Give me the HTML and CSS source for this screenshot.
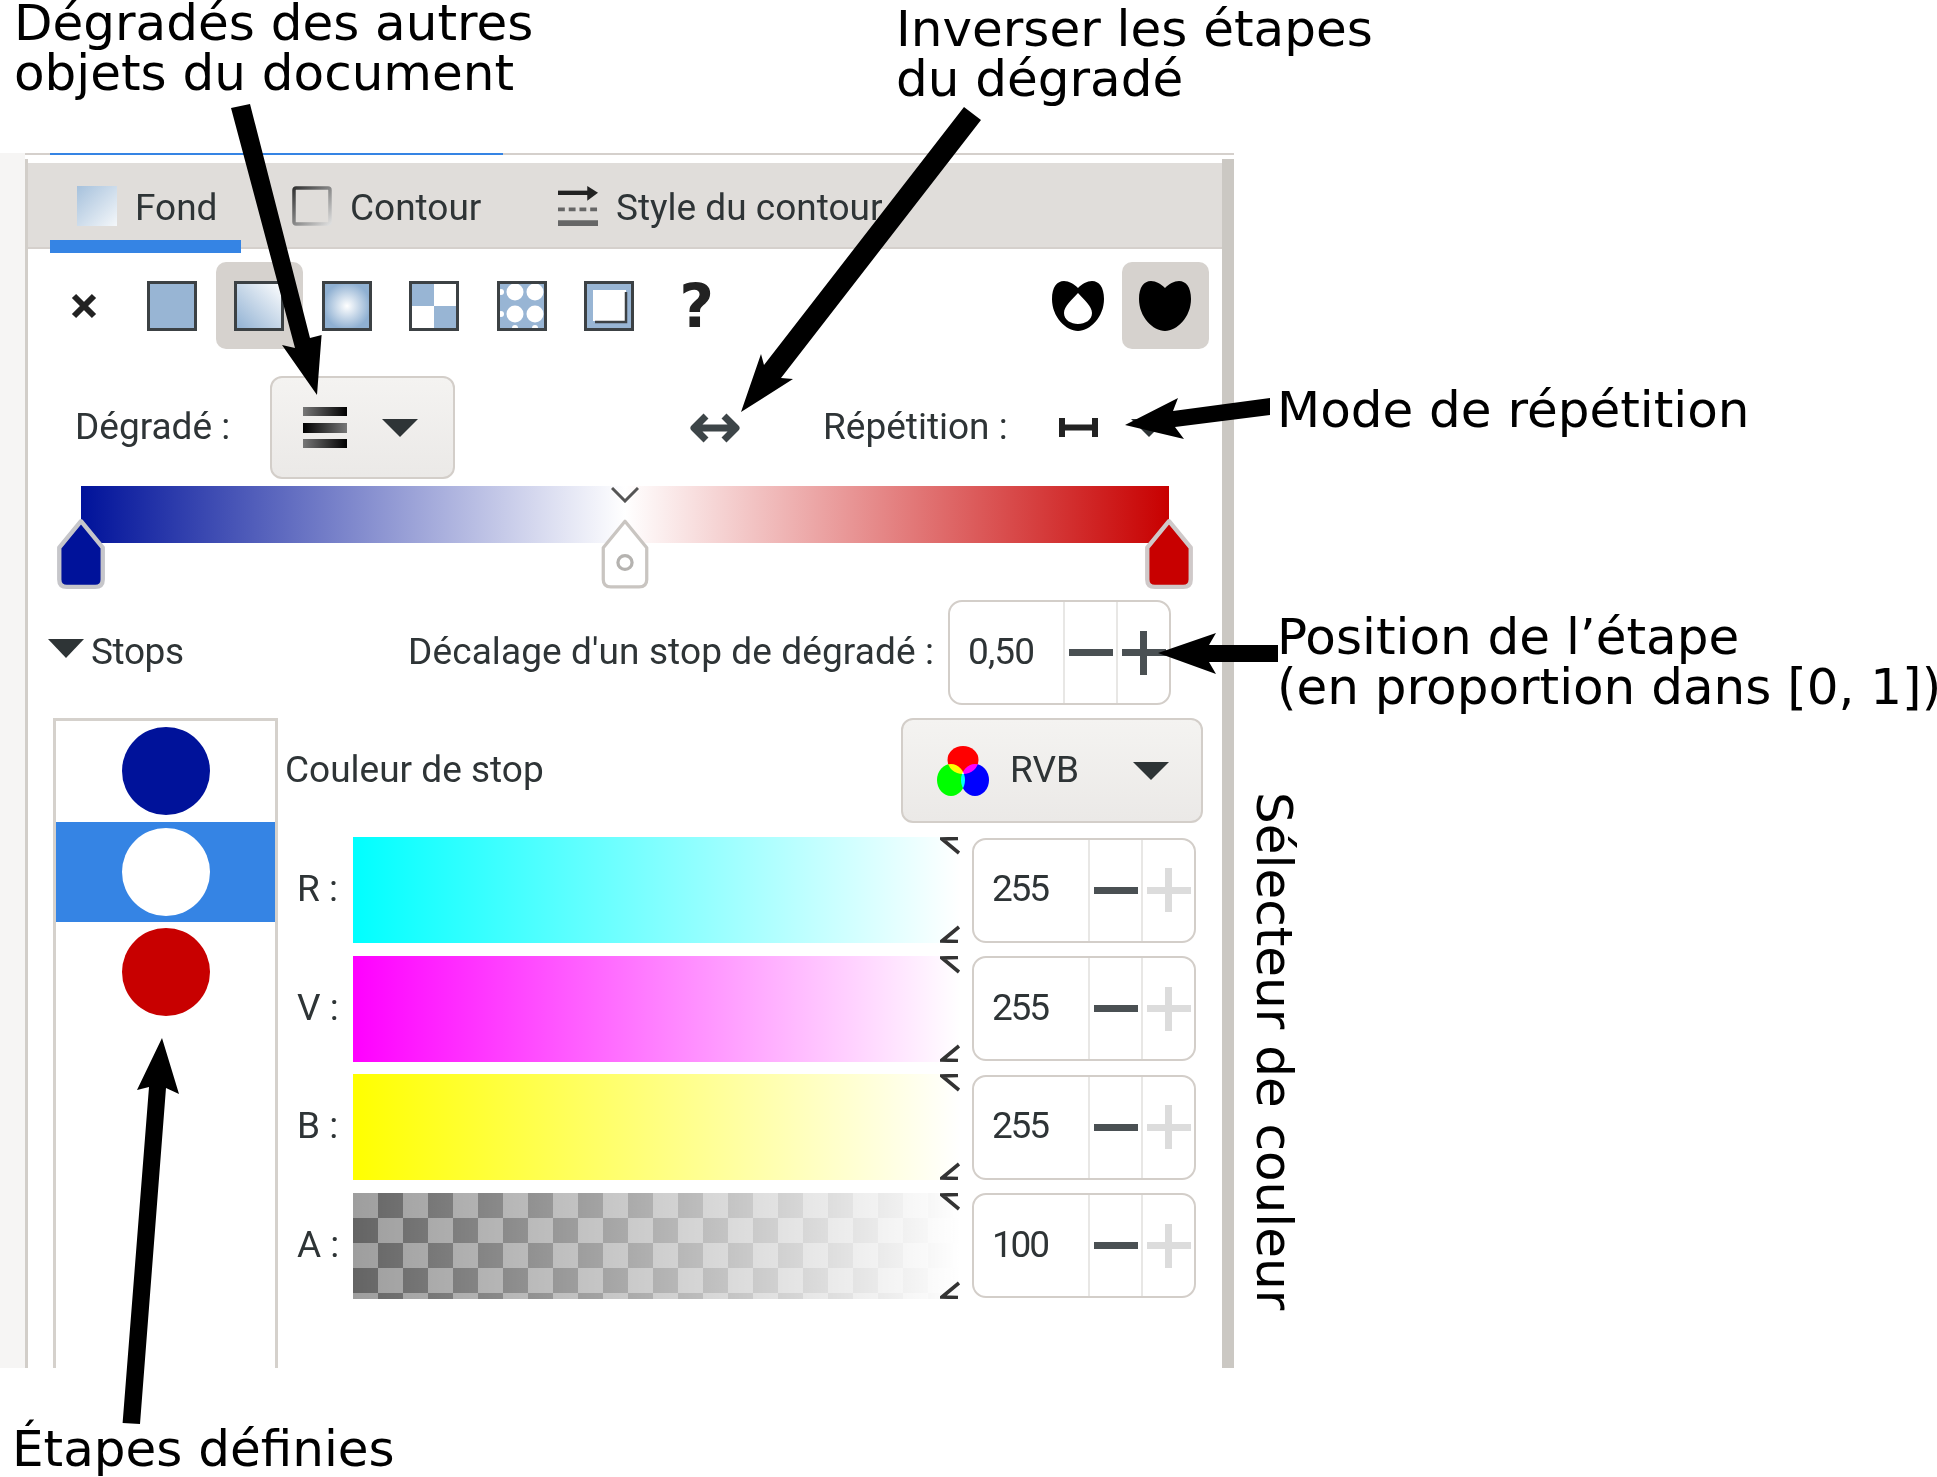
FILE: index.html
```html
<!DOCTYPE html>
<html lang="fr">
  <head>
    <meta charset="UTF-8" />
    <title>Fond et contour</title>
    <link rel="stylesheet" href="styles.css">
  </head>

  <body>
    <svg class="defs" width="0" height="0">
      <symbol id="tick-top" viewBox="0 0 20 18">
        <path d="M18 1.5 L2 2 L19 16" fill="none" stroke="#333" stroke-width="3.6" />
      </symbol>
      <symbol id="tick-bottom" viewBox="0 0 20 18">
        <path d="M19 2 L2 16 L18 16.5" fill="none" stroke="#333" stroke-width="3.6" />
      </symbol>
      <linearGradient id="diag" x1="0" y1="1" x2="1" y2="0">
        <stop offset="0" stop-color="#8fb0d2" />
        <stop offset="1" stop-color="#ffffff" />
      </linearGradient>
      <radialGradient id="radial">
        <stop offset="0" stop-color="#ffffff" />
        <stop offset="1" stop-color="#8fb0d2" />
      </radialGradient>
      <linearGradient id="tabfill" x1="0" y1="0" x2="1" y2="1">
        <stop offset="0" stop-color="#a6c1dc" />
        <stop offset="1" stop-color="#f4f7fa" />
      </linearGradient>
      <linearGradient id="tabstroke" x1="0" y1="0" x2="1" y2="1">
        <stop offset="0" stop-color="#333" />
        <stop offset="1" stop-color="#ddd" />
      </linearGradient>
      <linearGradient id="barfade" x1="0" y1="0" x2="1" y2="0">
        <stop offset="0" stop-color="#777" />
        <stop offset="1" stop-color="#000" />
      </linearGradient>
      <linearGradient id="barfade-back" x1="0" y1="0" x2="1" y2="0">
        <stop offset="0" stop-color="#000" />
        <stop offset="1" stop-color="#777" />
      </linearGradient>
    </svg>

    <!--Capture du dialogue-->
    <main class="panel">
      <div class="strip"></div>
      <div class="dialog">
        <div class="topline"><div class="topline-active"></div></div>
        <div class="dialog-body">

          <div class="tabs">
            <div class="tab tab-active">
              <svg class="tab-icon" viewBox="0 0 40 40"><rect width="40" height="40" fill="url(#tabfill)" /></svg>
              <span>Fond</span>
            </div>
            <div class="tab tab-contour">
              <svg class="tab-icon" viewBox="0 0 40 40"><rect x="2" y="2" width="36" height="36" fill="none" stroke="url(#tabstroke)" stroke-width="3.5" rx="2" /></svg>
              <span>Contour</span>
            </div>
            <div class="tab">
              <svg class="tab-icon" viewBox="0 0 41 41">
                <path d="M0 7 H32" stroke="#222" stroke-width="4.5" />
                <path d="M30 0 L41 7 L30 15 Z" fill="#222" />
                <path d="M0 24 H41" stroke="#666" stroke-width="4" stroke-dasharray="7 4" />
                <path d="M0 38 H41" stroke="#666" stroke-width="6" />
              </svg>
              <span>Style du contour</span>
            </div>
          </div>

          <div class="paint-row">
            <div class="paint-btn">
              <svg class="icon-x" viewBox="0 0 28 28"><path d="M4 4 L24 24 M24 4 L4 24" stroke="#222" stroke-width="6" /></svg>
            </div>
            <div class="paint-btn">
              <svg class="icon-square" viewBox="0 0 50 50"><rect x="1.5" y="1.5" width="47" height="47" fill="#98b5d4" stroke="#3c4144" stroke-width="3" /></svg>
            </div>
            <div class="paint-btn paint-btn-on">
              <svg class="icon-square" viewBox="0 0 50 50"><rect x="1.5" y="1.5" width="47" height="47" fill="url(#diag)" stroke="#3c4144" stroke-width="3" /></svg>
            </div>
            <div class="paint-btn">
              <svg class="icon-square" viewBox="0 0 50 50"><rect x="1.5" y="1.5" width="47" height="47" fill="url(#radial)" stroke="#3c4144" stroke-width="3" /></svg>
            </div>
            <div class="paint-btn">
              <svg class="icon-square" viewBox="0 0 50 50">
                <rect x="1.5" y="1.5" width="47" height="47" fill="#fff" />
                <rect x="2" y="2" width="23" height="23" fill="#98b5d4" />
                <rect x="25" y="25" width="23" height="23" fill="#98b5d4" />
                <rect x="1.5" y="1.5" width="47" height="47" fill="none" stroke="#3c4144" stroke-width="3" />
              </svg>
            </div>
            <div class="paint-btn">
              <svg class="icon-square" viewBox="0 0 50 50">
                <rect x="1.5" y="1.5" width="47" height="47" fill="#98b5d4" />
                <g fill="#fff">
                  <circle cx="18" cy="11" r="8.5" />
                  <circle cx="38" cy="11" r="8.5" />
                  <circle cx="18" cy="33" r="8.5" />
                  <circle cx="38" cy="33" r="8.5" />
                  <circle cx="4" cy="11" r="3" />
                  <circle cx="4" cy="33" r="3" />
                  <circle cx="18" cy="47" r="3" />
                  <circle cx="38" cy="47" r="3" />
                </g>
                <rect x="1.5" y="1.5" width="47" height="47" fill="none" stroke="#3c4144" stroke-width="3" />
              </svg>
            </div>
            <div class="paint-btn">
              <svg class="icon-square" viewBox="0 0 50 50">
                <rect x="1.5" y="1.5" width="47" height="47" fill="#98b5d4" stroke="#3c4144" stroke-width="3" />
                <rect x="9" y="9" width="33" height="31" fill="#fff" />
                <path d="M11 41 H42 V11" fill="none" stroke="#3c4144" stroke-width="2.5" />
              </svg>
            </div>
            <div class="paint-btn paint-unknown">?</div>

            <div class="rule-btn rule-first">
              <svg class="icon-rule" viewBox="0 0 52 50">
                <path fill-rule="evenodd" fill="#000" d="M26 7 C22 3 17 0 12 0 C5 0 0 6 0 18 C0 36 14 50 26 50 C38 50 52 36 52 18 C52 6 47 0 40 0 C35 0 30 3 26 7 Z M26 12 C20 19 12 25 12 32 C12 39 19 43 26 43 C33 43 40 39 40 32 C40 25 32 19 26 12 Z" />
              </svg>
            </div>
            <div class="rule-btn paint-btn-on">
              <svg class="icon-rule" viewBox="0 0 52 50">
                <path fill="#000" d="M26 7 C22 3 17 0 12 0 C5 0 0 6 0 18 C0 36 14 50 26 50 C38 50 52 36 52 18 C52 6 47 0 40 0 C35 0 30 3 26 7 Z" />
              </svg>
            </div>
          </div>

          <div class="gradient-row">
            <span class="label label-gradient">Dégradé :</span>
            <div class="combo combo-gradient">
              <svg class="icon-bars" viewBox="0 0 44 41">
                <rect y="0" width="44" height="9" fill="url(#barfade)" />
                <rect y="16" width="44" height="10" fill="url(#barfade-back)" />
                <rect y="32" width="44" height="9" fill="url(#barfade)" />
              </svg>
              <span class="caret"></span>
            </div>
            <svg class="icon-flip" viewBox="0 0 50 32">
              <path d="M4 16 H46 M16 4 L4 16 L16 28 M34 4 L46 16 L34 28" fill="none" stroke="#3d4548" stroke-width="7" stroke-linejoin="round" />
            </svg>
            <span class="label label-repeat">Répétition :</span>
            <svg class="icon-repeat" viewBox="0 0 39 19">
              <path d="M3 0 V19 M36 0 V19 M2 9.5 H37" stroke="#222" stroke-width="6" fill="none" />
            </svg>
            <span class="caret caret-repeat"></span>
          </div>

          <div class="gradient-widget">
            <div class="gradient-bar"></div>
            <svg class="midpoint" viewBox="0 0 28 16"><path d="M1 1 L14 14 L27 1" fill="none" stroke="#555" stroke-width="3" /></svg>
            <svg class="stop-handle stop-handle-start" viewBox="0 0 46 68" preserveAspectRatio="none">
              <path d="M23 3 L43 28 V58 Q43 65 36 65 H10 Q3 65 3 58 V28 Z" fill="#00129a" stroke="#c6c6ca" stroke-width="4" stroke-linejoin="round" />
            </svg>
            <svg class="stop-handle stop-handle-mid" viewBox="0 0 46 68" preserveAspectRatio="none">
              <path d="M23 3 L43 28 V58 Q43 65 36 65 H10 Q3 65 3 58 V28 Z" fill="#fff" stroke="#c9c5c1" stroke-width="3" stroke-linejoin="round" />
              <circle cx="23" cy="42" r="6.5" fill="#fff" stroke="#b5b3b0" stroke-width="3" />
            </svg>
            <svg class="stop-handle stop-handle-end" viewBox="0 0 46 68" preserveAspectRatio="none">
              <path d="M23 3 L43 28 V58 Q43 65 36 65 H10 Q3 65 3 58 V28 Z" fill="#c80000" stroke="#cfc9c9" stroke-width="4" stroke-linejoin="round" />
            </svg>
          </div>

          <div class="stops-row">
            <span class="caret caret-stops"></span>
            <span class="label label-stops">Stops</span>
            <span class="label label-offset">Décalage d'un stop de dégradé :</span>
            <div class="spin spin-offset">
              <div class="spin-value">0,50</div>
              <div class="spin-btn"><span class="minus"></span></div>
              <div class="spin-btn"><span class="plus"></span></div>
            </div>
          </div>

          <div class="stops-main">
            <div class="stop-list">
              <div class="stop-item"><span class="stop-dot dot-blue"></span></div>
              <div class="stop-item stop-item-on"><span class="stop-dot dot-white"></span></div>
              <div class="stop-item"><span class="stop-dot dot-red"></span></div>
            </div>

            <div class="color-col">
              <div class="color-head">
                <span class="label">Couleur de stop</span>
                <div class="combo combo-mode">
                  <svg class="icon-rgb" viewBox="0 0 52 50">
                    <g class="rgb-group">
                      <ellipse cx="26" cy="14" rx="15.5" ry="14" fill="#f00" />
                      <ellipse cx="14" cy="34" rx="14" ry="16" fill="#0f0" />
                      <ellipse cx="38" cy="34" rx="14" ry="16" fill="#00f" />
                    </g>
                  </svg>
                  <span class="label label-mode">RVB</span>
                  <span class="caret"></span>
                </div>
              </div>

              <div class="color-rows">
                <div class="color-row">
                  <span class="label channel">R :</span>
                  <div class="color-bar bar-r">
                    <svg class="tick tick-up"><use href="#tick-top" /></svg>
                    <svg class="tick tick-down"><use href="#tick-bottom" /></svg>
                  </div>
                  <div class="spin spin-channel">
                    <div class="spin-value">255</div>
                    <div class="spin-btn"><span class="minus"></span></div>
                    <div class="spin-btn"><span class="plus plus-off"></span></div>
                  </div>
                </div>
                <div class="color-row">
                  <span class="label channel">V :</span>
                  <div class="color-bar bar-v">
                    <svg class="tick tick-up"><use href="#tick-top" /></svg>
                    <svg class="tick tick-down"><use href="#tick-bottom" /></svg>
                  </div>
                  <div class="spin spin-channel">
                    <div class="spin-value">255</div>
                    <div class="spin-btn"><span class="minus"></span></div>
                    <div class="spin-btn"><span class="plus plus-off"></span></div>
                  </div>
                </div>
                <div class="color-row">
                  <span class="label channel">B :</span>
                  <div class="color-bar bar-b">
                    <svg class="tick tick-up"><use href="#tick-top" /></svg>
                    <svg class="tick tick-down"><use href="#tick-bottom" /></svg>
                  </div>
                  <div class="spin spin-channel">
                    <div class="spin-value">255</div>
                    <div class="spin-btn"><span class="minus"></span></div>
                    <div class="spin-btn"><span class="plus plus-off"></span></div>
                  </div>
                </div>
                <div class="color-row">
                  <span class="label channel">A :</span>
                  <div class="color-bar bar-a">
                    <svg class="tick tick-up"><use href="#tick-top" /></svg>
                    <svg class="tick tick-down"><use href="#tick-bottom" /></svg>
                  </div>
                  <div class="spin spin-channel">
                    <div class="spin-value">100</div>
                    <div class="spin-btn"><span class="minus"></span></div>
                    <div class="spin-btn"><span class="plus plus-off"></span></div>
                  </div>
                </div>
              </div>
            </div>
          </div>

        </div>
      </div>
    </main>
    <!--Fin de la capture-->

    <!--Annotations-->
    <svg class="arrows" viewBox="0 0 1937 1477">
      <polygon points="231,108 250,104 310,338 321.6,335 317,395 282,345 295,348" />
      <polygon points="964,107 981,120 781,378 793,379 741,412 761,354 764,365" />
      <polygon points="1270,398 1270,415 1175,427 1184,439 1125,425 1178,398 1173,411" />
      <polygon points="1278,645 1278,662 1209,662 1216,674 1158,653 1216,633 1209,645" />
      <polygon points="122.6,1423 140,1424 166,1088 179,1094 162,1038 137,1090 149,1087" />
    </svg>

    <p class="note note-objects">Dégradés des autres<br>objets du document</p>
    <p class="note note-invert">Inverser les étapes<br>du dégradé</p>
    <p class="note note-repeat">Mode de répétition</p>
    <p class="note note-position">Position de l’étape<br>(en proportion dans [0, 1])</p>
    <p class="note note-selector">Sélecteur de couleur</p>
    <p class="note note-stops">Étapes définies</p>
  </body>
</html>
```
FILE: styles.css
```css
* {
  margin: 0px;
  padding: 0px;
  box-sizing: border-box;
}

body {
  position: relative;
  width: 1937px;
  height: 1477px;
  overflow: hidden;
  background-color: white;
  font-family: "DejaVu Sans", sans-serif;
}

.defs {
  position: absolute;
}

/* the dialog is an upscaled capture, so it stays a bit soft */
.panel {
  display: flex;
  width: 1234px;
  height: 1215px;
  margin-top: 153px;
  overflow: hidden;
  background-color: white;
  color: #2e3436;
  font-family: Roboto, sans-serif;
  font-size: 37px;
  filter: blur(0.7px);
}

.strip {
  width: 25px;
  background-color: #f6f5f4;
}

.dialog {
  flex: 1;
  display: flex;
  flex-direction: column;
}

.topline {
  height: 2px;
  background-color: #d5d0cc;
}

.topline-active {
  width: 453px;
  height: 2px;
  margin-left: 25px;
  background-color: #3584e4;
}

.dialog-body {
  flex: 1;
  margin-top: 4px;
  padding-top: 4px;
  border-left: 3px solid #d2cec9;
  border-right: 12px solid #cbc8c3;
}

.label {
  margin-bottom: 2px;
  white-space: nowrap;
  line-height: 40px;
}

/* tabs */
.tabs {
  display: flex;
  height: 86px;
  padding-left: 22px;
  background-color: #e0ddda;
  border-bottom: 2px solid #d5d0cc;
}

.tab {
  display: flex;
  gap: 18px;
  flex-shrink: 0;
  height: 90px;
  padding: 23px 0 0 27px;
  line-height: 40px;
  white-space: nowrap;
}

.tab span {
  margin-top: 2px;
}

.tab-active {
  width: 191px;
  border-bottom: 13px solid #3584e4;
}

.tab-contour {
  width: 242px;
  margin: 0 24px;
}

.tab-icon {
  width: 40px;
  height: 40px;
}

/* paint buttons */
.paint-row {
  display: flex;
  height: 87px;
  margin-top: 13px;
  padding: 0 13px 0 12.5px;
}

.paint-btn,
.rule-btn {
  display: flex;
  align-items: center;
  justify-content: center;
  width: 87.5px;
  border-radius: 10px;
}

.paint-btn-on {
  background-color: #d6d2ce;
}

.rule-first {
  margin-left: auto;
}

.icon-x {
  width: 28px;
  height: 28px;
}

.icon-square {
  width: 50px;
  height: 50px;
}

.icon-rule {
  width: 52px;
  height: 50px;
}

.paint-unknown {
  font-family: "DejaVu Sans", sans-serif;
  font-size: 60px;
  font-weight: bold;
  color: #222;
}

/* gradient row */
.gradient-row {
  display: flex;
  align-items: center;
  height: 103px;
  margin-top: 27px;
  padding-left: 47px;
}

.label-gradient {
  width: 195px;
}

.combo {
  display: flex;
  align-items: center;
  background: linear-gradient(#f4f3f1, #ebe9e7);
  border: 2px solid #d3cec9;
  border-radius: 12px;
}

.combo-gradient {
  width: 185px;
  height: 103px;
  padding-left: 31px;
}

.caret {
  flex-shrink: 0;
  width: 0;
  height: 0;
  border-left: 18px solid transparent;
  border-right: 18px solid transparent;
  border-top: 18px solid #2e3436;
}

.combo-gradient .caret {
  margin-left: 35px;
}

.icon-bars {
  width: 44px;
  height: 41px;
}

.icon-flip {
  width: 50px;
  height: 32px;
  margin-left: 235px;
}

.label-repeat {
  width: 236px;
  margin-left: 83px;
}

.icon-repeat {
  width: 39px;
  height: 19px;
}

.caret-repeat {
  margin-left: 33px;
}

/* gradient preview with its stop handles */
.gradient-widget {
  position: relative;
  height: 102px;
  margin-top: 7px;
}

.gradient-bar {
  width: 1088px;
  height: 57px;
  margin-left: 53px;
  background: linear-gradient(to right, #00129a, #ffffff 50%, #c80000);
}

.midpoint {
  position: absolute;
  left: 583px;
  top: 1px;
  width: 28px;
  height: 16px;
}

.stop-handle {
  position: absolute;
  top: 32px;
  width: 50px;
  height: 72px;
}

.stop-handle-start {
  left: 28px;
}

.stop-handle-mid {
  left: 572px;
}

.stop-handle-end {
  left: 1116px;
}

/* stops row */
.stops-row {
  display: flex;
  align-items: center;
  height: 105px;
  margin-top: 12px;
  padding: 0 51px 0 20px;
}

.caret-stops {
  margin: 0 7px 8px 0;
  border-left-width: 18.5px;
  border-right-width: 18.5px;
  border-top-width: 19px;
}

.label-stops {
  letter-spacing: -0.4px;
}

.label-offset {
  margin: 0 14px 2px auto;
  letter-spacing: 0.1px;
}

.spin {
  display: flex;
  background-color: white;
  border: 2px solid #d3cec9;
  border-radius: 14px;
}

.spin-offset {
  width: 223px;
  height: 105px;
}

.spin-channel {
  width: 224px;
  height: 105px;
}

.spin-value {
  display: flex;
  align-items: center;
  flex: 1;
  padding: 0 0 2px 18px;
  line-height: 40px;
  letter-spacing: -0.9px;
}

.spin-channel .spin-value {
  letter-spacing: -2.2px;
}

.spin-btn {
  display: flex;
  align-items: center;
  justify-content: center;
  width: 53px;
  border-left: 2px solid #e8e7e5;
}

.minus {
  width: 44px;
  height: 7px;
  background-color: #4a5053;
}

.plus {
  width: 44px;
  height: 44px;
  background: linear-gradient(#4a5053, #4a5053) center / 100% 7px no-repeat,
    linear-gradient(#4a5053, #4a5053) center / 7px 100% no-repeat;
}

.plus-off {
  background: linear-gradient(#dcdcdc, #dcdcdc) center / 100% 7px no-repeat,
    linear-gradient(#dcdcdc, #dcdcdc) center / 7px 100% no-repeat;
}

/* stop list and colour selector */
.stops-main {
  display: flex;
  margin-top: 13px;
  padding-left: 25px;
}

.stop-list {
  flex-shrink: 0;
  width: 225px;
  height: 700px;
  border: 3px solid #d5d1cc;
  border-bottom: 0;
}

.stop-item {
  display: flex;
  align-items: center;
  justify-content: center;
  height: 100.5px;
}

.stop-item-on {
  background-color: #3584e4;
}

.stop-dot {
  width: 88px;
  height: 88px;
  border-radius: 50%;
}

.dot-blue {
  background-color: #00129a;
}

.dot-white {
  background-color: white;
}

.dot-red {
  background-color: #c80000;
}

.color-col {
  flex: 1;
}

.color-head {
  display: flex;
  align-items: center;
  justify-content: space-between;
  height: 105px;
  padding: 0 19px 0 7px;
}

.combo-mode {
  width: 302px;
  height: 105px;
  padding-left: 34px;
}

.icon-rgb {
  width: 52px;
  height: 50px;
}

.rgb-group {
  isolation: isolate;
}

.rgb-group ellipse {
  mix-blend-mode: screen;
}

.label-mode {
  margin-left: 21px;
}

.combo-mode .caret {
  margin-left: 54px;
}

.color-rows {
  display: grid;
  grid-auto-rows: 106px;
  row-gap: 12.6px;
  margin-top: 14px;
  padding-left: 19px;
}

.color-row {
  display: flex;
  align-items: center;
}

.channel {
  width: 56px;
}

.color-bar {
  position: relative;
  width: 607px;
  height: 106px;
  margin-right: 12px;
}

.bar-r {
  background: linear-gradient(to right, #00ffff, #ffffff);
}

.bar-v {
  background: linear-gradient(to right, #ff00ff, #ffffff);
}

.bar-b {
  background: linear-gradient(to right, #ffff00, #ffffff);
}

.bar-a {
  background: linear-gradient(to right, rgba(255, 255, 255, 0), #ffffff),
    conic-gradient(#646464 25%, #9e9e9e 0 50%, #646464 0 75%, #9e9e9e 0) 0 0 / 50px 50px;
}

.tick {
  position: absolute;
  right: 0;
  width: 20px;
  height: 18px;
}

.tick-up {
  top: 0;
}

.tick-down {
  bottom: 0;
}

/* annotations over the capture */
.arrows {
  position: absolute;
  left: 0;
  top: 0;
  width: 1937px;
  height: 1477px;
}

.note {
  position: absolute;
  color: black;
  font-size: 50px;
  line-height: 50px;
  white-space: nowrap;
}

.note-objects {
  left: 14px;
  top: -2px;
}

.note-invert {
  left: 896px;
  top: 4px;
}

.note-repeat {
  left: 1277px;
  top: 385px;
}

.note-position {
  left: 1277px;
  top: 612px;
}

.note-selector {
  left: 1249px;
  top: 792px;
  writing-mode: vertical-rl;
}

.note-stops {
  left: 12px;
  top: 1424px;
}
```
